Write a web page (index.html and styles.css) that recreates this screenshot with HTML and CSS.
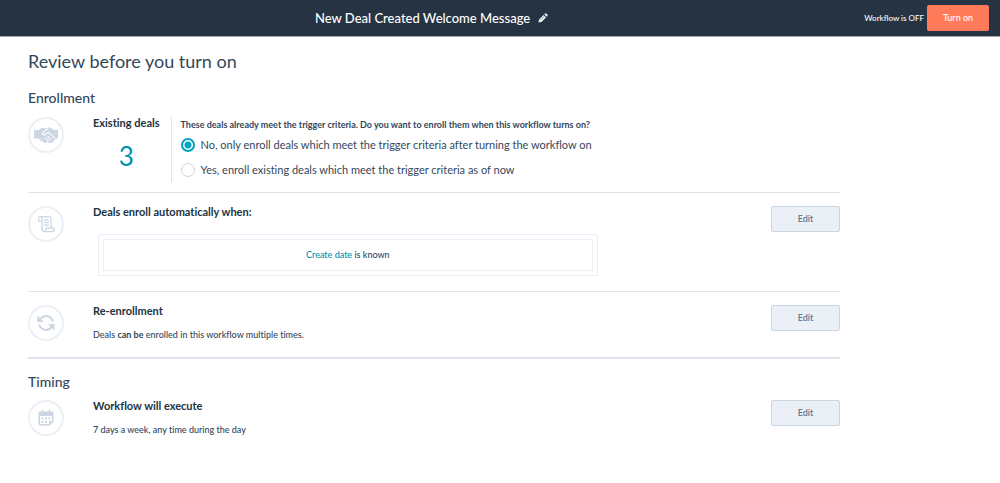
FILE: index.html
```html
<!DOCTYPE html>
<html lang="en">
<head>
<meta charset="utf-8">
<title>New Deal Created Welcome Message</title>
<link rel="stylesheet" href="styles.css">
</head>
<body>
<header class="topbar">
  <div class="topbar-title">
    <span>New Deal Created Welcome Message</span>
    <button class="rename" type="button" aria-label="Rename workflow">
      <svg width="10" height="10" viewBox="0 0 20 20"><path d="M1 19l1-6L11 4l5 5-9 9zM12.500 2.500l1.500-1.500q1.500-1 3 .3l1.700 1.700q1.300 1.500.3 3L17.500 7.500z" fill="#eaf0f6"/><path d="M5 14l7-7" stroke="#7c8894" stroke-width="1.500"/></svg>
    </button>
  </div>
  <div class="topbar-actions">
    <span class="status">Workflow is OFF</span>
    <button class="turn-on" type="button">Turn on</button>
  </div>
</header>
<main class="review">
  <h1>Review before you turn on</h1>

  <h2>Enrollment</h2>
  <section class="row existing">
    <div class="badge">
      <svg width="24" height="17" viewBox="0 0 70 48"><path fill="#cbd6e2" d="M0 8h13l9-6q9-2 13 2 5-4 12-3l12 7h11v25h-9q1 5-4 7-2 6-7 4-3 4-8 1l-4-4-3 4q-4 3-7-1l-2-3q-4 3-6-2-4 1-5-3l-4-3H0z"/><path d="M42 5q-5-1-9 4l-7 8q-3 5 3 5 4 0 8-5l5-2 18 17M39 25l11 11M32 29l11 12" stroke="#fff" stroke-width="3" fill="none"/><path d="M15 37l6-6M22 41l6-6" stroke="#fff" stroke-width="2"/></svg>
    </div>
    <div class="count">
      <h3>Existing deals</h3>
      <p class="number">3</p>
    </div>
    <fieldset class="choices">
      <legend>These deals already meet the trigger criteria. Do you want to enroll them when this workflow turns on?</legend>
      <label><input type="radio" name="enroll" checked><span>No, only enroll deals which meet the trigger criteria after turning the workflow on</span></label>
      <label><input type="radio" name="enroll"><span>Yes, enroll existing deals which meet the trigger criteria as of now</span></label>
    </fieldset>
  </section>

  <section class="row triggers">
    <div class="badge">
      <svg width="18" height="18" viewBox="0 0 36 36" fill="none" stroke="#cbd6e2" stroke-width="2.500" stroke-linejoin="round"><path d="M8 12H3V7q0-4 4-4h17q4 0 4 4v19M7 3q3 0 3 4v21q0 5 5 5h15q4 0 4-4v-3H18v3q0 4-3 4"/><path d="M14 10h10M14 15h10M14 20h10"/></svg>
    </div>
    <div class="detail">
      <h3>Deals enroll automatically when:</h3>
      <div class="criteria"><p><a href="#create-date">Create date</a> is known</p></div>
    </div>
    <button class="edit" type="button">Edit</button>
  </section>

  <section class="row reenroll">
    <div class="badge">
      <svg width="18" height="18" viewBox="0 0 36 36"><path d="M6 11Q11 4 18 4q10 0 14 11M30 25q-5 7-12 7Q8 32 4 21" fill="none" stroke="#cbd6e2" stroke-width="4"/><path d="M1 3v13h13zM35 33V20H22z" fill="#cbd6e2"/></svg>
    </div>
    <div class="detail">
      <h3>Re-enrollment</h3>
      <p>Deals <strong>can be</strong> enrolled in this workflow multiple times.</p>
    </div>
    <button class="edit" type="button">Edit</button>
  </section>

  <h2>Timing</h2>
  <section class="row timing">
    <div class="badge">
      <svg width="16" height="18" viewBox="0 0 32 36"><path d="M4 5h24q3 0 3 3v17l-8 8H4q-3 0-3-3V8q0-3 3-3z" fill="#cbd6e2"/><path d="M4 14h24v10h-6v6H4z" fill="#fff"/><path d="M9 1v7M23 1v7" stroke="#cbd6e2" stroke-width="3"/><path d="M7 17h4v4H7zM14 17h4v4h-4zM21 17h4v4h-4zM7 24h4v4H7zM14 24h4v4h-4z" fill="#cbd6e2"/></svg>
    </div>
    <div class="detail">
      <h3>Workflow will execute</h3>
      <p>7 days a week, any time during the day</p>
    </div>
    <button class="edit" type="button">Edit</button>
  </section>
</main>
</body>
</html>
```
FILE: styles.css
```css
* { box-sizing: border-box; }
body {
  margin: 0;
  background: #fff;
  color: #33475b;
  font: 500 9px/16px Lato, "Open Sans", sans-serif;
  font-variant-ligatures: none;
}
h1, h2, h3, p { margin: 0; }
button { font: inherit; cursor: pointer; }

.topbar {
  display: flex;
  align-items: center;
  height: 36px;
  padding: 0 11px;
  background: #253342;
  color: #fff;
  box-shadow: 0 1px 0 #a3abb5;
}
.topbar-title {
  flex: 1;
  display: flex;
  align-items: center;
  justify-content: center;
  gap: 8px;
  padding-right: 12px;
  font-size: 13px;
}
.rename { display: flex; padding: 0; border: 0; background: none; }
.topbar-actions {
  display: flex;
  align-items: center;
  gap: 3px;
}
.status { font-size: 8px; }
.turn-on {
  width: 62px;
  height: 26px;
  padding: 0;
  border: 0;
  border-radius: 2px;
  background: #ff7a59;
  color: #fff;
}

.review { padding: 13px 160px 0 28px; }
h1 { font-size: 18px; line-height: 24px; font-weight: 400; }
h2 { margin-top: 17px; font-size: 14px; line-height: 16px; font-weight: 500; }
h3 { color: #213343; font-size: 11px; line-height: 12px; font-weight: 700; }

.row {
  display: grid;
  grid-template-columns: 36px 1fr 69px;
  column-gap: 29px;
  align-items: start;
}
.row + h2 { margin-top: 15px; }
.badge {
  display: flex;
  align-items: center;
  justify-content: center;
  width: 36px;
  height: 36px;
  border: 2px solid #eaf0f6;
  border-radius: 50%;
}
.existing {
  grid-template-columns: 36px auto 1fr;
  padding: 11px 0 10px;
  border-bottom: 1px solid #dfe3eb;
}
.count {
  height: 65px;
  padding-right: 11px;
  border-right: 1px solid #dfe3eb;
}
.number {
  margin-top: 12px;
  color: #0091ae;
  font-size: 26px;
  line-height: 30px;
  font-weight: 400;
  text-align: center;
}
.choices {
  margin: 0 0 0 -20px;
  padding: 0;
  border: 0;
  font-size: 11px;
  font-weight: 400;
}
.choices legend { padding: 0; font-size: 9px; line-height: 15px; font-weight: 700; }
.choices label {
  display: flex;
  align-items: center;
  gap: 6px;
  height: 25px;
}
.choices input {
  appearance: none;
  width: 14px;
  height: 14px;
  margin: 0;
  border: 1px solid #cbd6e2;
  border-radius: 50%;
  background: #fff;
}
.choices input:checked {
  border: 2px solid #00a4bd;
  background: radial-gradient(circle, #00a4bd 3px, #fff 4px);
}

.triggers { padding: 13px 0 15px; border-bottom: 1px solid #dfe3eb; }
.criteria {
  width: 77%;
  min-width: 240px;
  margin: 16px 0 0 5px;
  padding: 4px;
  border: 1px solid #eaf0f6;
}
.criteria p {
  padding: 7px;
  border: 1px solid #eaf0f6;
  text-align: center;
}
.criteria a { color: #0091ae; text-decoration: none; }
.reenroll { padding: 13px 0 14px; border-bottom: 2px solid #dfe3eb; }
.detail > p { margin-top: 10px; }
.edit {
  height: 26px;
  padding: 0;
  border: 1px solid #cbd6e2;
  border-radius: 2px;
  background: #eaf0f6;
  color: #506e91;
}
.timing { padding-top: 10px; }
```
